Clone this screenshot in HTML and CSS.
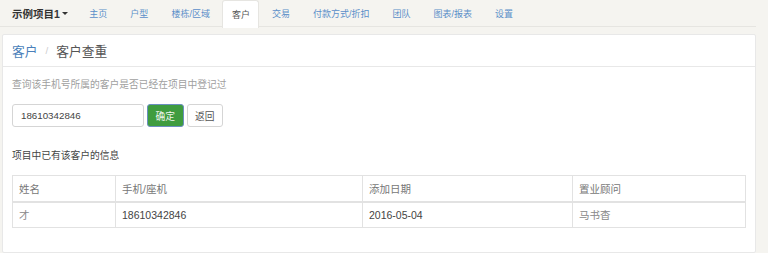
FILE: index.html
```html
<!DOCTYPE html>
<html lang="zh-CN">
<head>
    <meta charset="UTF-8">
    <title>客户查重</title>
    <link rel="stylesheet" href="styles.css">
</head>
<body>

    <nav class="navbar">
        <a class="brand" href="#">示例项目1<span class="caret"></span></a>
        <ul class="nav">
            <li><a href="#">主页</a></li>
            <li><a href="#">户型</a></li>
            <li><a href="#">楼栋/区域</a></li>
            <li class="active"><a href="#">客户</a></li>
            <li><a href="#">交易</a></li>
            <li><a href="#">付款方式/折扣</a></li>
            <li><a href="#">团队</a></li>
            <li><a href="#">图表/报表</a></li>
            <li><a href="#">设置</a></li>
        </ul>
    </nav>

    <div class="panel">
        <div class="panel-heading">
            <a href="#" class="crumb-link">客户</a>
            <span class="crumb-sep">/</span>
            <span class="crumb-current">客户查重</span>
        </div>
        <div class="panel-body">
            <p class="hint">查询该手机号所属的客户是否已经在项目中登记过</p>
            <form class="search-form">
                <input type="text" class="form-input" value="18610342846">
                <button type="button" class="btn btn-success">确定</button>
                <button type="button" class="btn btn-default">返回</button>
            </form>
            <p class="result-title">项目中已有该客户的信息</p>
            <table class="table">
                <thead>
                    <tr>
                        <th class="col-name">姓名</th>
                        <th class="col-phone">手机/座机</th>
                        <th class="col-date">添加日期</th>
                        <th>置业顾问</th>
                    </tr>
                </thead>
                <tbody>
                    <tr>
                        <td class="cjk">才</td>
                        <td>18610342846</td>
                        <td>2016-05-04</td>
                        <td class="cjk">马书杳</td>
                    </tr>
                </tbody>
            </table>
        </div>
    </div>

</body>
</html>
```

FILE: styles.css
```css
:root {
    --page-bg: #f5f4f0;
    --link: #5b8fc9;
    --border: #dddddd;
}

* {
    margin: 0;
    padding: 0;
    box-sizing: border-box;
}

body {
    font-family: 'Liberation Sans', 'Noto Sans CJK SC', sans-serif;
    font-size: 9.75px;
    color: #444;
    background-color: var(--page-bg);
}

a {
    text-decoration: none;
}

/* --- 顶部导航 --- */
.navbar {
    display: flex;
    align-items: stretch;
    height: 27px;
    width: 756px;
    border-bottom: 1px solid #e6e5e1;
}
.brand {
    display: flex;
    align-items: center;
    padding: 0 10px 0 12px;
    font-size: 10.5px;
    font-weight: 700;
    color: #333;
}
.caret {
    display: inline-block;
    margin-left: 2px;
    border-top: 3px solid #333;
    border-left: 3px solid transparent;
    border-right: 3px solid transparent;
}
.nav {
    display: flex;
    list-style: none;
}
.nav li a {
    display: flex;
    align-items: center;
    height: 27px;
    padding: 0 11.5px;
    font-size: 9px;
    color: var(--link);
}
.nav li.active a {
    background-color: #fff;
    color: #555;
    padding: 0 8.5px;
    margin: 0 1px;
    border: 1px solid #e6e5e1;
    border-bottom: none;
    border-radius: 3px 3px 0 0;
    height: 28px;
}

/* --- 面板 --- */
.panel {
    width: 754px;
    margin: 7px 0 0 2px;
    height: 219px;
    background-color: #fff;
    border: 1px solid #e8e8e8;
    border-radius: 2px;
}
.panel-heading {
    display: flex;
    align-items: center;
    height: 32px;
    padding: 0 9px;
    border-bottom: 1px solid #e8e8e8;
    font-size: 12.75px;
}
.crumb-link {
    color: #4a7fba;
}
.crumb-sep {
    color: #ccc;
    margin: 0 8px;
    font-size: 9.75px;
}
.crumb-current {
    color: #555;
}

.panel-body {
    padding: 11px 9px 0 9px;
}
.hint {
    color: #a0a0a0;
    line-height: 14px;
}

.search-form {
    display: flex;
    gap: 3px;
    margin-top: 12px;
}
.form-input {
    width: 132px;
    height: 23px;
    padding: 0 8px;
    border: 1px solid #d5d5d5;
    border-radius: 3px;
    font-family: inherit;
    font-size: 9.75px;
    color: #444;
}
.btn {
    height: 23px;
    padding: 0 7.5px;
    border-radius: 3px;
    font-family: inherit;
    font-size: 9.75px;
    white-space: nowrap;
}
.btn-success {
    background-color: #3f9c3f;
    border: 1px solid #6b8fbf;
    color: #eef5ee;
}
.btn-default {
    background-color: #fff;
    border: 1px solid #d5d5d5;
    color: #555;
}

.result-title {
    margin-top: 22px;
    line-height: 14px;
}

.table {
    width: 734px;
    margin-top: 12px;
    border-collapse: collapse;
    font-size: 10.5px;
    color: #444;
}
.table th,
.table td {
    height: 26px;
    padding: 0 6px;
    border: 1px solid #e2e2e2;
    text-align: left;
    font-weight: 400;
}
.table th {
    color: #777;
    border-bottom-width: 2px;
}
.table td.cjk {
    color: #888;
}
.col-name {
    width: 103px;
}
.col-phone {
    width: 247px;
}
.col-date {
    width: 210px;
}
```
